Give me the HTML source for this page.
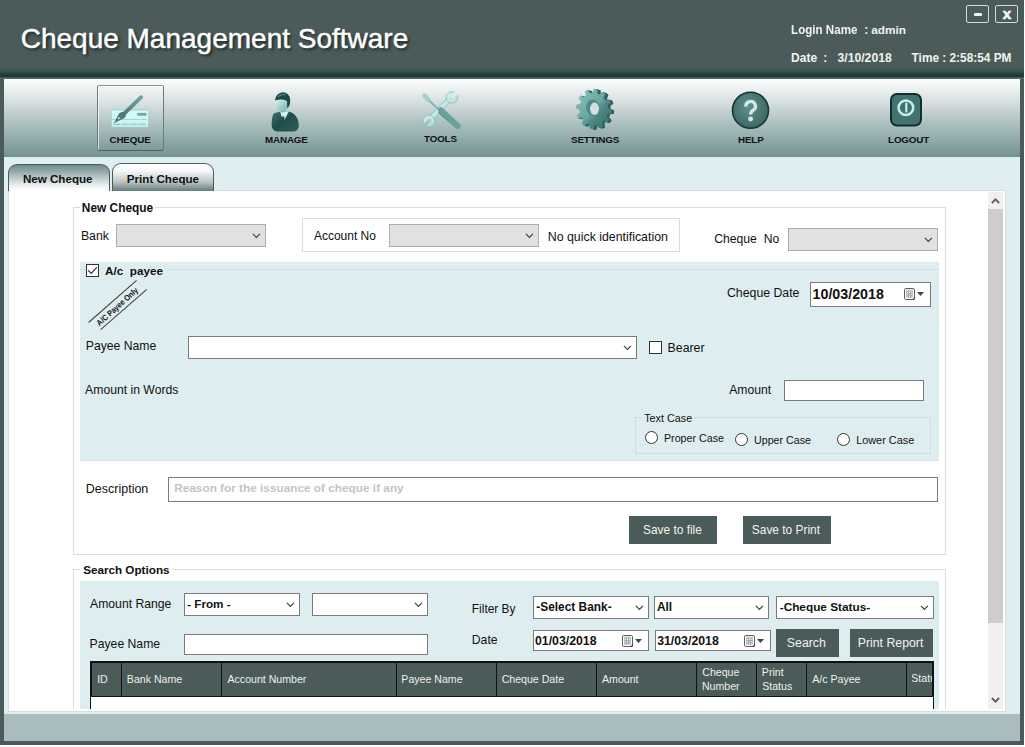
<!DOCTYPE html>
<html><head><meta charset="utf-8"><style>
html,body{margin:0;padding:0;}
body{width:1025px;height:747px;position:relative;overflow:hidden;background:#fff;font-family:"Liberation Sans",sans-serif;color:#111;}
body>div,body>svg{position:absolute;}
.t{position:absolute;white-space:nowrap;}
svg{position:absolute;overflow:visible;}
</style></head><body>
<div style="left:0px;top:0px;width:1024px;height:745px;background:#4a5b59"></div>
<div style="left:0px;top:67px;width:1024px;height:12px;background:linear-gradient(#4a5b59 0px,#3a5351 4px,#1c3d3b 8px,#173937 9.5px,#445856 10.5px,#4a5b59 11px,#6a7675 12px)"></div>
<div class="t" style="left:20.70px;top:25px;font-size:28px;line-height:28px;color:#fff;text-shadow:2px 2px 3px rgba(0,0,0,0.6);-webkit-text-stroke:0.45px #fff">Cheque Management Software</div>
<div class="t" style="left:791.10px;top:24px;font-size:11.6px;line-height:11.6px;font-weight:bold;color:#f2f2ee;transform:scaleY(1.03);transform-origin:0 100%">Login Name</div>
<div class="t" style="left:864.26px;top:24px;font-size:12px;line-height:12px;font-weight:bold;color:#f2f2ee;">:</div>
<div class="t" style="left:871.25px;top:25px;font-size:11.8px;line-height:11.8px;font-weight:bold;color:#f2f2ee;">admin</div>
<div class="t" style="left:791.07px;top:52px;font-size:12px;line-height:12px;font-weight:bold;color:#f2f2ee;">Date</div>
<div class="t" style="left:823.36px;top:52px;font-size:12px;line-height:12px;font-weight:bold;color:#f2f2ee;">:</div>
<div class="t" style="left:837.50px;top:52px;font-size:12.2px;line-height:12.2px;font-weight:bold;color:#f2f2ee;">3/10/2018</div>
<div class="t" style="left:911.58px;top:53px;font-size:11.85px;line-height:11.85px;font-weight:bold;color:#f2f2ee;">Time : 2:58:54 PM</div>
<div style="left:966px;top:5px;width:23px;height:18px;border:1px solid #cfe0dc;border-radius:2px;box-sizing:border-box"></div>
<div style="left:974px;top:13px;width:8px;height:3px;background:#f4f4f4;border-radius:1px"></div>
<div style="left:995px;top:5px;width:23px;height:18px;border:1px solid #cfe0dc;border-radius:2px;box-sizing:border-box"></div>
<div class="t" style="left:1002.85px;top:6px;font-size:15.2px;line-height:15.2px;font-weight:bold;color:#f6f6f6;-webkit-text-stroke:0.6px #f6f6f6">x</div>
<div style="left:4px;top:79px;width:1016px;height:78px;background:linear-gradient(#fbfcfc 0px,#f0f3f3 8px,#d3dcdc 25px,#abbfbf 45px,#8ea9a9 62px,#759292 78px)"></div>
<div style="left:97px;top:85px;width:67px;height:66px;border:1px solid;border-color:#8a9393 #6f7b7b #566363 #6f7b7b;border-radius:2px;box-sizing:border-box;box-shadow:inset 1px 1px 0 rgba(255,255,255,0.6);background:linear-gradient(rgba(255,255,255,0.2),rgba(0,0,0,0.02))"></div>
<div class="t" style="left:109.51px;top:135px;font-size:9.8px;line-height:9.8px;font-weight:bold;color:#111;letter-spacing:-0.15px">CHEQUE</div>
<div class="t" style="left:265.06px;top:135px;font-size:9.8px;line-height:9.8px;font-weight:bold;color:#111;letter-spacing:-0.15px">MANAGE</div>
<div class="t" style="left:424.00px;top:134px;font-size:9.8px;line-height:9.8px;font-weight:bold;color:#111;letter-spacing:-0.15px">TOOLS</div>
<div class="t" style="left:571.00px;top:135px;font-size:9.9px;line-height:9.9px;font-weight:bold;color:#111;letter-spacing:-0.15px">SETTINGS</div>
<div class="t" style="left:738.06px;top:135px;font-size:9.8px;line-height:9.8px;font-weight:bold;color:#111;letter-spacing:-0.15px">HELP</div>
<div class="t" style="left:888.06px;top:135px;font-size:9.8px;line-height:9.8px;font-weight:bold;color:#111;letter-spacing:-0.15px">LOGOUT</div>
<svg style="left:0;top:0" width="1025" height="160">
<defs>
<linearGradient id="card" x1="0" y1="0" x2="0" y2="1"><stop offset="0" stop-color="#a9dcd8"/><stop offset="0.12" stop-color="#d8fbf8"/><stop offset="1" stop-color="#c4f2ee"/></linearGradient>
<linearGradient id="pen" x1="0" y1="0" x2="1" y2="0"><stop offset="0" stop-color="#4a7e7a"/><stop offset="1" stop-color="#72a5a1"/></linearGradient>
<linearGradient id="face" x1="0" y1="0" x2="1" y2="1"><stop offset="0" stop-color="#c8f6f3"/><stop offset="1" stop-color="#6fa9a5"/></linearGradient>
<linearGradient id="suit" x1="0" y1="0" x2="1" y2="1"><stop offset="0" stop-color="#3f716d"/><stop offset="0.45" stop-color="#1f4d4a"/><stop offset="1" stop-color="#2c5c59"/></linearGradient>
<linearGradient id="wr" x1="0" y1="0" x2="1" y2="1"><stop offset="0" stop-color="#d6f6f4"/><stop offset="1" stop-color="#a8dcd9"/></linearGradient>
<linearGradient id="gear" x1="0" y1="0" x2="1" y2="1"><stop offset="0" stop-color="#8cc4c0"/><stop offset="0.5" stop-color="#6aa6a2"/><stop offset="0.62" stop-color="#4f8a86"/><stop offset="1" stop-color="#326763"/></linearGradient>
<radialGradient id="help" cx="0.45" cy="0.4" r="0.6"><stop offset="0" stop-color="#5f8f8c"/><stop offset="1" stop-color="#3c6865"/></radialGradient>
</defs>
<!-- cheque -->
<rect x="111.5" y="109.5" width="37" height="17.5" rx="1.5" fill="url(#card)" stroke="#9ed6d2" stroke-width="0.8"/>
<rect x="137.2" y="112.9" width="9.2" height="2.8" fill="#6fa8a4"/>
<path d="M112 119.5 H146.5" stroke="#8cc6c2" stroke-width="0.7"/>
<path d="M113 124.3 H147" stroke="#86c0bc" stroke-width="1.1" stroke-dasharray="7.6 0.9"/>
<path d="M124 113.8 L141.2 97.2" stroke="url(#pen)" stroke-width="3.9" stroke-linecap="round"/>
<path d="M113.8 123.2 L119 113.5 Q122 110.8 125.2 112.2 Q127 115 124.5 118 Z" fill="#4a7c78"/>
<circle cx="118.8" cy="118.3" r="1" fill="#c8efec"/>
<!-- manage -->
<path d="M273.8 113.2 Q271.4 117.5 271.7 125.5 Q272 130.2 276.5 131.6 L294 131.6 Q298.7 130.2 298.8 126 Q298.8 116.5 292 112.7 L288.5 111.2 L281 111.5 Z" fill="url(#suit)"/>
<path d="M280.2 111.8 L283.2 122.5 L289 111.3 Z" fill="#d4f0ee"/>
<path d="M281.8 116.5 L284.3 116.5 L284.6 122.5 L283.2 124 L281.9 122.5 Z" fill="#1f4a47"/>
<path d="M275.8 101.5 Q275.8 112.6 282 112.6 Q287.2 112.3 287.6 104 L287 100 Z" fill="url(#face)"/>
<path d="M275 100.5 Q275.5 93.5 282.5 92.3 Q289.5 92.5 290.2 100 Q290.3 106 287.3 108.5 L287 101 Q282 98.5 275 100.5 Z" fill="#1e4845"/>
<path d="M277.8 96.8 Q281 94.2 285.5 94.6" stroke="#5c8f8b" stroke-width="1.1" fill="none"/>
<!-- tools -->
<defs>
<mask id="jaw1" maskUnits="userSpaceOnUse" x="400" y="80" width="80" height="60"><rect x="400" y="80" width="80" height="60" fill="#fff"/>
<path d="M450.23 96.44 L453.06 99.26 L459.07 93.26 L456.24 90.43 Z" fill="#000"/><circle cx="451.65" cy="97.85" r="2" fill="#000"/></mask>
<mask id="jaw2" maskUnits="userSpaceOnUse" x="400" y="80" width="80" height="60"><rect x="400" y="80" width="80" height="60" fill="#fff"/>
<path d="M427.94 119.23 L430.77 122.06 L424.76 128.07 L421.93 125.24 Z" fill="#000"/><circle cx="429.35" cy="120.65" r="2" fill="#000"/></mask>
</defs>
<path d="M432 117 L448.5 100.5" stroke="#8cc2be" stroke-width="6" stroke-linecap="round"/>
<path d="M432 117 L448.5 100.5" stroke="url(#wr)" stroke-width="4.4" stroke-linecap="round"/>
<g mask="url(#jaw1)"><circle cx="452" cy="97.5" r="5.7" fill="url(#wr)" stroke="#8cc2be" stroke-width="0.9"/></g>
<g mask="url(#jaw2)"><circle cx="429" cy="121" r="5.7" fill="url(#wr)" stroke="#8cc2be" stroke-width="0.9"/></g>
<path d="M428.5 100 L441.5 112" stroke="#7fb6b2" stroke-width="2"/>
<path d="M424.5 95.8 L428.3 99.6" stroke="#bfe8e5" stroke-width="4" stroke-linecap="round"/>
<path d="M424.5 95.8 L428.3 99.6" stroke="#86bcb8" stroke-width="4.8" stroke-linecap="round" stroke-opacity="0.5" fill="none"/>
<path d="M440.5 109.5 L444 113 L458.2 125.6 Q459.5 128.8 456.5 128.8 L441.5 116 L438 112.5 Z" fill="#5d9490"/>
<path d="M441 110 L458 126" stroke="#6aa19d" stroke-width="5.5" stroke-linecap="round"/>
<!-- settings gear -->
<g transform="translate(593.2,108.8)">
<path d="M15.99 -0.59 L19.99 0.62 L19.56 4.15 L15.39 4.38 L14.14 7.48 L17.00 10.53 L14.87 13.38 L11.14 11.49 L8.51 13.55 L9.46 17.62 L6.19 19.02 L3.90 15.52 L0.59 15.99 L-0.62 19.99 L-4.15 19.56 L-4.38 15.39 L-7.48 14.14 L-10.53 17.00 L-13.38 14.87 L-11.49 11.14 L-13.55 8.51 L-17.62 9.46 L-19.02 6.19 L-15.52 3.90 L-15.99 0.59 L-19.99 -0.62 L-19.56 -4.15 L-15.39 -4.38 L-14.14 -7.48 L-17.00 -10.53 L-14.87 -13.38 L-11.14 -11.49 L-8.51 -13.55 L-9.46 -17.62 L-6.19 -19.02 L-3.90 -15.52 L-0.59 -15.99 L0.62 -19.99 L4.15 -19.56 L4.38 -15.39 L7.48 -14.14 L10.53 -17.00 L13.38 -14.87 L11.49 -11.14 L13.55 -8.51 L17.62 -9.46 L19.02 -6.19 L15.52 -3.90 Z" transform="translate(3.85,1.05) scale(0.86,1)" fill="#2f6360"/><path d="M15.99 -0.59 L19.99 0.62 L19.56 4.15 L15.39 4.38 L14.14 7.48 L17.00 10.53 L14.87 13.38 L11.14 11.49 L8.51 13.55 L9.46 17.62 L6.19 19.02 L3.90 15.52 L0.59 15.99 L-0.62 19.99 L-4.15 19.56 L-4.38 15.39 L-7.48 14.14 L-10.53 17.00 L-13.38 14.87 L-11.49 11.14 L-13.55 8.51 L-17.62 9.46 L-19.02 6.19 L-15.52 3.90 L-15.99 0.59 L-19.99 -0.62 L-19.56 -4.15 L-15.39 -4.38 L-14.14 -7.48 L-17.00 -10.53 L-14.87 -13.38 L-11.14 -11.49 L-8.51 -13.55 L-9.46 -17.62 L-6.19 -19.02 L-3.90 -15.52 L-0.59 -15.99 L0.62 -19.99 L4.15 -19.56 L4.38 -15.39 L7.48 -14.14 L10.53 -17.00 L13.38 -14.87 L11.49 -11.14 L13.55 -8.51 L17.62 -9.46 L19.02 -6.19 L15.52 -3.90 Z" transform="translate(3.30,0.90) scale(0.86,1)" fill="#2f6360"/><path d="M15.99 -0.59 L19.99 0.62 L19.56 4.15 L15.39 4.38 L14.14 7.48 L17.00 10.53 L14.87 13.38 L11.14 11.49 L8.51 13.55 L9.46 17.62 L6.19 19.02 L3.90 15.52 L0.59 15.99 L-0.62 19.99 L-4.15 19.56 L-4.38 15.39 L-7.48 14.14 L-10.53 17.00 L-13.38 14.87 L-11.49 11.14 L-13.55 8.51 L-17.62 9.46 L-19.02 6.19 L-15.52 3.90 L-15.99 0.59 L-19.99 -0.62 L-19.56 -4.15 L-15.39 -4.38 L-14.14 -7.48 L-17.00 -10.53 L-14.87 -13.38 L-11.14 -11.49 L-8.51 -13.55 L-9.46 -17.62 L-6.19 -19.02 L-3.90 -15.52 L-0.59 -15.99 L0.62 -19.99 L4.15 -19.56 L4.38 -15.39 L7.48 -14.14 L10.53 -17.00 L13.38 -14.87 L11.49 -11.14 L13.55 -8.51 L17.62 -9.46 L19.02 -6.19 L15.52 -3.90 Z" transform="translate(2.75,0.75) scale(0.86,1)" fill="#2f6360"/><path d="M15.99 -0.59 L19.99 0.62 L19.56 4.15 L15.39 4.38 L14.14 7.48 L17.00 10.53 L14.87 13.38 L11.14 11.49 L8.51 13.55 L9.46 17.62 L6.19 19.02 L3.90 15.52 L0.59 15.99 L-0.62 19.99 L-4.15 19.56 L-4.38 15.39 L-7.48 14.14 L-10.53 17.00 L-13.38 14.87 L-11.49 11.14 L-13.55 8.51 L-17.62 9.46 L-19.02 6.19 L-15.52 3.90 L-15.99 0.59 L-19.99 -0.62 L-19.56 -4.15 L-15.39 -4.38 L-14.14 -7.48 L-17.00 -10.53 L-14.87 -13.38 L-11.14 -11.49 L-8.51 -13.55 L-9.46 -17.62 L-6.19 -19.02 L-3.90 -15.52 L-0.59 -15.99 L0.62 -19.99 L4.15 -19.56 L4.38 -15.39 L7.48 -14.14 L10.53 -17.00 L13.38 -14.87 L11.49 -11.14 L13.55 -8.51 L17.62 -9.46 L19.02 -6.19 L15.52 -3.90 Z" transform="translate(2.20,0.60) scale(0.86,1)" fill="#2f6360"/><path d="M15.99 -0.59 L19.99 0.62 L19.56 4.15 L15.39 4.38 L14.14 7.48 L17.00 10.53 L14.87 13.38 L11.14 11.49 L8.51 13.55 L9.46 17.62 L6.19 19.02 L3.90 15.52 L0.59 15.99 L-0.62 19.99 L-4.15 19.56 L-4.38 15.39 L-7.48 14.14 L-10.53 17.00 L-13.38 14.87 L-11.49 11.14 L-13.55 8.51 L-17.62 9.46 L-19.02 6.19 L-15.52 3.90 L-15.99 0.59 L-19.99 -0.62 L-19.56 -4.15 L-15.39 -4.38 L-14.14 -7.48 L-17.00 -10.53 L-14.87 -13.38 L-11.14 -11.49 L-8.51 -13.55 L-9.46 -17.62 L-6.19 -19.02 L-3.90 -15.52 L-0.59 -15.99 L0.62 -19.99 L4.15 -19.56 L4.38 -15.39 L7.48 -14.14 L10.53 -17.00 L13.38 -14.87 L11.49 -11.14 L13.55 -8.51 L17.62 -9.46 L19.02 -6.19 L15.52 -3.90 Z" transform="translate(1.65,0.45) scale(0.86,1)" fill="#2f6360"/><path d="M15.99 -0.59 L19.99 0.62 L19.56 4.15 L15.39 4.38 L14.14 7.48 L17.00 10.53 L14.87 13.38 L11.14 11.49 L8.51 13.55 L9.46 17.62 L6.19 19.02 L3.90 15.52 L0.59 15.99 L-0.62 19.99 L-4.15 19.56 L-4.38 15.39 L-7.48 14.14 L-10.53 17.00 L-13.38 14.87 L-11.49 11.14 L-13.55 8.51 L-17.62 9.46 L-19.02 6.19 L-15.52 3.90 L-15.99 0.59 L-19.99 -0.62 L-19.56 -4.15 L-15.39 -4.38 L-14.14 -7.48 L-17.00 -10.53 L-14.87 -13.38 L-11.14 -11.49 L-8.51 -13.55 L-9.46 -17.62 L-6.19 -19.02 L-3.90 -15.52 L-0.59 -15.99 L0.62 -19.99 L4.15 -19.56 L4.38 -15.39 L7.48 -14.14 L10.53 -17.00 L13.38 -14.87 L11.49 -11.14 L13.55 -8.51 L17.62 -9.46 L19.02 -6.19 L15.52 -3.90 Z" transform="translate(1.10,0.30) scale(0.86,1)" fill="#4a837f"/><path d="M15.99 -0.59 L19.99 0.62 L19.56 4.15 L15.39 4.38 L14.14 7.48 L17.00 10.53 L14.87 13.38 L11.14 11.49 L8.51 13.55 L9.46 17.62 L6.19 19.02 L3.90 15.52 L0.59 15.99 L-0.62 19.99 L-4.15 19.56 L-4.38 15.39 L-7.48 14.14 L-10.53 17.00 L-13.38 14.87 L-11.49 11.14 L-13.55 8.51 L-17.62 9.46 L-19.02 6.19 L-15.52 3.90 L-15.99 0.59 L-19.99 -0.62 L-19.56 -4.15 L-15.39 -4.38 L-14.14 -7.48 L-17.00 -10.53 L-14.87 -13.38 L-11.14 -11.49 L-8.51 -13.55 L-9.46 -17.62 L-6.19 -19.02 L-3.90 -15.52 L-0.59 -15.99 L0.62 -19.99 L4.15 -19.56 L4.38 -15.39 L7.48 -14.14 L10.53 -17.00 L13.38 -14.87 L11.49 -11.14 L13.55 -8.51 L17.62 -9.46 L19.02 -6.19 L15.52 -3.90 Z" transform="translate(0.55,0.15) scale(0.86,1)" fill="#4a837f"/>
<path d="M15.99 -0.59 L19.99 0.62 L19.56 4.15 L15.39 4.38 L14.14 7.48 L17.00 10.53 L14.87 13.38 L11.14 11.49 L8.51 13.55 L9.46 17.62 L6.19 19.02 L3.90 15.52 L0.59 15.99 L-0.62 19.99 L-4.15 19.56 L-4.38 15.39 L-7.48 14.14 L-10.53 17.00 L-13.38 14.87 L-11.49 11.14 L-13.55 8.51 L-17.62 9.46 L-19.02 6.19 L-15.52 3.90 L-15.99 0.59 L-19.99 -0.62 L-19.56 -4.15 L-15.39 -4.38 L-14.14 -7.48 L-17.00 -10.53 L-14.87 -13.38 L-11.14 -11.49 L-8.51 -13.55 L-9.46 -17.62 L-6.19 -19.02 L-3.90 -15.52 L-0.59 -15.99 L0.62 -19.99 L4.15 -19.56 L4.38 -15.39 L7.48 -14.14 L10.53 -17.00 L13.38 -14.87 L11.49 -11.14 L13.55 -8.51 L17.62 -9.46 L19.02 -6.19 L15.52 -3.90 Z" transform="scale(0.86,1)" fill="url(#gear)"/>
<ellipse cx="-0.5" cy="-1.2" rx="6.6" ry="7.8" fill="#4f8a86"/>
<ellipse cx="1.3" cy="0" rx="4.4" ry="6.2" fill="#d4dfdf"/>
</g>
<!-- help -->
<circle cx="750.5" cy="110.3" r="18" fill="url(#help)" stroke="#173533" stroke-width="1.6"/>
<path d="M745.9 106.6 A4.75 4.75 0 1 1 753.2 110.2 Q750.6 111.6 750.6 114.6" stroke="#d4eaea" stroke-width="3.3" fill="none"/><circle cx="750.6" cy="119" r="2.45" fill="#d4eaea"/>
<!-- logout -->
<rect x="891" y="94" width="30" height="31.5" rx="6" fill="#427370" stroke="#112e2c" stroke-width="2"/>
<circle cx="905.9" cy="107.8" r="7.3" fill="none" stroke="#c6eeec" stroke-width="2.5"/>
<path d="M906.3 102.8 V112.4" stroke="#c6eeec" stroke-width="2.2"/>
</svg>
<div style="left:4px;top:157px;width:1016px;height:557px;background:#dfeef1"></div>
<div style="left:8px;top:164px;width:102px;height:28px;border:1px solid #4a5b59;border-bottom:none;border-radius:9px 9px 0 0;box-sizing:border-box;background:linear-gradient(#718b8b 0px,#91a7a7 6px,#c2cfcf 14px,#e9eeee 20px,#ffffff 25px)"></div>
<div class="t" style="left:22.95px;top:173px;font-size:11.6px;line-height:11.6px;font-weight:bold;color:#111;">New Cheque</div>
<div style="left:112px;top:163px;width:102px;height:29px;border:1px solid #4a5b59;border-bottom:none;border-radius:9px 9px 0 0;box-sizing:border-box;background:linear-gradient(#ffffff 0px,#f6f8f8 7px,#b9c4c4 18px,#5e7272 28px)"></div>
<div class="t" style="left:126.85px;top:173px;font-size:11.6px;line-height:11.6px;font-weight:bold;color:#111;">Print Cheque</div>
<div style="left:8px;top:191px;width:998px;height:521px;background:#fff;border:1px solid #dcdcdc;border-top:none;box-sizing:border-box"></div>
<div style="left:217px;top:190px;width:789px;height:1px;background:#d6dcdd"></div>
<div style="left:988px;top:192px;width:15px;height:517px;background:#f0f0f0"></div>
<div style="left:988px;top:209px;width:15px;height:414px;background:#cdcdcd"></div>
<svg style="left:988px;top:192px" width="15" height="17"><path d="M3.9 11 L7.5 7.4 L11.1 11" stroke="#606060" stroke-width="1.9" fill="none"/></svg>
<svg style="left:988px;top:692px" width="15" height="17"><path d="M3.9 6 L7.5 9.6 L11.1 6" stroke="#606060" stroke-width="1.9" fill="none"/></svg>
<div style="left:73px;top:207px;width:873px;height:348px;border:1px solid #dcdcdc;box-sizing:border-box"></div>
<div style="left:80px;top:200px;width:75px;height:14px;background:#fff"></div>
<div class="t" style="left:81.83px;top:203px;font-size:11.9px;line-height:11.9px;font-weight:bold;color:#111;">New Cheque</div>
<div class="t" style="left:80.92px;top:230px;font-size:12.3px;line-height:12.3px;color:#111;">Bank</div>
<div style="left:116px;top:224px;width:150px;height:23px;background:#e1e1e1;border:1px solid #adadad;box-sizing:border-box"></div>
<svg style="left:252.2px;top:231.0px" width="10" height="8"><path d="M0.9 2.9 L4.4 6.4 L7.9 2.9" stroke="#404040" stroke-width="1.15" fill="none"/></svg>
<div style="left:302px;top:218px;width:378px;height:34px;border:1px solid #dcdcdc;box-sizing:border-box"></div>
<div class="t" style="left:313.90px;top:230px;font-size:12px;line-height:12px;color:#111;">Account No</div>
<div style="left:389px;top:224px;width:150px;height:23px;background:#e1e1e1;border:1px solid #adadad;box-sizing:border-box"></div>
<svg style="left:525.2px;top:231.0px" width="10" height="8"><path d="M0.9 2.9 L4.4 6.4 L7.9 2.9" stroke="#404040" stroke-width="1.15" fill="none"/></svg>
<div class="t" style="left:547.81px;top:231px;font-size:12.35px;line-height:12.35px;color:#111;">No quick identification</div>
<div class="t" style="left:714.19px;top:233px;font-size:12.2px;line-height:12.2px;color:#111;">Cheque</div>
<div class="t" style="left:763.82px;top:233px;font-size:12.2px;line-height:12.2px;color:#111;">No</div>
<div style="left:788px;top:228px;width:150px;height:23px;background:#e1e1e1;border:1px solid #adadad;box-sizing:border-box"></div>
<svg style="left:924.2px;top:235.0px" width="10" height="8"><path d="M0.9 2.9 L4.4 6.4 L7.9 2.9" stroke="#404040" stroke-width="1.15" fill="none"/></svg>
<div style="left:80px;top:262px;width:859px;height:199px;background:#deedf0;border-bottom:1px solid #d3e0e3;box-sizing:border-box"></div>
<div style="left:80px;top:269px;width:859px;height:1px;background:#cfdee1"></div>
<div style="left:86px;top:263px;width:83px;height:16px;background:#deedf0"></div>
<div style="left:86px;top:264px;width:13px;height:13px;background:#fff;border:1px solid #333;box-sizing:border-box"></div>
<svg style="left:86px;top:264px" width="13" height="13"><path d="M2.3 6.5 L5.3 9.4 L10.8 3.4" stroke="#333" stroke-width="1.2" fill="none"/></svg>
<div class="t" style="left:105.11px;top:265px;font-size:11.7px;line-height:11.7px;font-weight:bold;color:#111;">A/c&nbsp; payee</div>
<svg style="left:82px;top:278px" width="70" height="56"><path d="M6.6 44.5 L54.6 2.4" stroke="#3e4a4a" stroke-width="1.1"/><path d="M18.6 51.6 L64.8 11.4" stroke="#3e4a4a" stroke-width="1.1"/><text x="0" y="0" font-family="Liberation Sans" font-weight="bold" font-size="8.3" textLength="52.5" lengthAdjust="spacingAndGlyphs" fill="#111" transform="translate(17.6,48.2) rotate(-42)">A/C Payee Only</text></svg>
<div class="t" style="left:726.99px;top:287px;font-size:12.3px;line-height:12.3px;color:#111;">Cheque Date</div>
<div style="left:810px;top:282px;width:121px;height:25px;background:#fff;border:1px solid #7a7a7a;box-sizing:border-box"></div>
<div class="t" style="left:812.54px;top:287px;font-size:14.25px;line-height:14.25px;font-weight:bold;color:#111;">10/03/2018</div>
<svg style="left:904px;top:288px" width="22" height="13"><rect x="0.5" y="0.5" width="10" height="11" rx="1.3" fill="#fff" stroke="#5e5e5e" stroke-width="1"/><path d="M2 2.2 H9" stroke="#9a9a9a" stroke-width="0.8"/><rect x="2.2" y="3.2" width="6.6" height="6.6" fill="#a4a8ae"/><rect x="2.9" y="4.0" width="1" height="1" fill="#fff"/><rect x="2.9" y="6.2" width="1" height="1" fill="#fff"/><rect x="2.9" y="8.4" width="1" height="1" fill="#fff"/><rect x="5.1" y="4.0" width="1" height="1" fill="#fff"/><rect x="5.1" y="6.2" width="1" height="1" fill="#fff"/><rect x="5.1" y="8.4" width="1" height="1" fill="#fff"/><rect x="7.3" y="4.0" width="1" height="1" fill="#fff"/><rect x="7.3" y="6.2" width="1" height="1" fill="#fff"/><rect x="7.3" y="8.4" width="1" height="1" fill="#fff"/><path d="M8.3 11.6 L10.9 9 L10.9 11.6 Z" fill="#3a3a3a"/><path d="M13 4 H20 L16.5 8 Z" fill="#3d4552"/></svg>
<div class="t" style="left:85.82px;top:340px;font-size:12.2px;line-height:12.2px;color:#111;">Payee Name</div>
<div style="left:188px;top:336px;width:449px;height:23px;background:#fff;border:1px solid #7a7a7a;box-sizing:border-box"></div>
<svg style="left:623.2px;top:343.0px" width="10" height="8"><path d="M0.9 2.9 L4.4 6.4 L7.9 2.9" stroke="#404040" stroke-width="1.15" fill="none"/></svg>
<div style="left:649px;top:341px;width:13px;height:13px;background:#fff;border:1px solid #333;box-sizing:border-box"></div>
<div class="t" style="left:667.62px;top:342px;font-size:12.3px;line-height:12.3px;color:#111;">Bearer</div>
<div class="t" style="left:85.10px;top:384px;font-size:12.2px;line-height:12.2px;color:#111;">Amount in Words</div>
<div class="t" style="left:729.20px;top:384px;font-size:12.2px;line-height:12.2px;color:#111;">Amount</div>
<div style="left:784px;top:380px;width:140px;height:21px;background:#fff;border:1px solid #7a7a7a;box-sizing:border-box"></div>
<div style="left:635px;top:417px;width:296px;height:37px;border:1px solid #cfdde0;box-sizing:border-box"></div>
<div style="left:641px;top:410px;width:53px;height:14px;background:#deedf0"></div>
<div class="t" style="left:644.18px;top:413px;font-size:10.8px;line-height:10.8px;color:#111;">Text Case</div>
<svg style="left:645px;top:431px" width="13" height="13"><circle cx="6.5" cy="6.5" r="6" fill="#fff" stroke="#333" stroke-width="1"/></svg>
<div class="t" style="left:663.94px;top:433px;font-size:10.7px;line-height:10.7px;color:#111;">Proper Case</div>
<svg style="left:735px;top:433px" width="13" height="13"><circle cx="6.5" cy="6.5" r="6" fill="#fff" stroke="#333" stroke-width="1"/></svg>
<div class="t" style="left:754.00px;top:435px;font-size:10.7px;line-height:10.7px;color:#111;">Upper Case</div>
<svg style="left:837px;top:433px" width="13" height="13"><circle cx="6.5" cy="6.5" r="6" fill="#fff" stroke="#333" stroke-width="1"/></svg>
<div class="t" style="left:856.13px;top:435px;font-size:10.9px;line-height:10.9px;color:#111;">Lower Case</div>
<div class="t" style="left:85.80px;top:483px;font-size:12.5px;line-height:12.5px;color:#111;">Description</div>
<div style="left:168px;top:477px;width:770px;height:25px;background:#fff;border:1px solid #7a7a7a;box-sizing:border-box"></div>
<div class="t" style="left:174.23px;top:483px;font-size:11.8px;line-height:11.8px;font-weight:bold;color:#c4c4c4;">Reason for the issuance of cheque if any</div>
<div style="left:629px;top:516px;width:88px;height:28px;background:#4a5b59"></div>
<div class="t" style="left:643.06px;top:525px;font-size:11.9px;line-height:11.9px;color:#f2f2f2;">Save to file</div>
<div style="left:743px;top:516px;width:88px;height:28px;background:#4a5b59"></div>
<div class="t" style="left:751.86px;top:525px;font-size:11.9px;line-height:11.9px;color:#f2f2f2;">Save to Print</div>
<div style="left:73px;top:569px;width:873px;height:140px;border:1px solid #dcdcdc;border-bottom:none;box-sizing:border-box"></div>
<div style="left:80px;top:563px;width:92px;height:14px;background:#fff"></div>
<div class="t" style="left:83.15px;top:564px;font-size:11.7px;line-height:11.7px;font-weight:bold;color:#111;">Search Options</div>
<div style="left:80px;top:581px;width:859px;height:128px;background:#deedf0"></div>
<div class="t" style="left:90.05px;top:598px;font-size:12.2px;line-height:12.2px;color:#111;">Amount Range</div>
<div style="left:184px;top:593px;width:116px;height:23px;background:#fff;border:1px solid #7a7a7a;box-sizing:border-box"></div>
<svg style="left:286.2px;top:600.0px" width="10" height="8"><path d="M0.9 2.9 L4.4 6.4 L7.9 2.9" stroke="#404040" stroke-width="1.15" fill="none"/></svg>
<div class="t" style="left:187.13px;top:598px;font-size:11.7px;line-height:11.7px;font-weight:bold;color:#111;">- From -</div>
<div style="left:312px;top:593px;width:116px;height:23px;background:#fff;border:1px solid #7a7a7a;box-sizing:border-box"></div>
<svg style="left:414.2px;top:600.0px" width="10" height="8"><path d="M0.9 2.9 L4.4 6.4 L7.9 2.9" stroke="#404040" stroke-width="1.15" fill="none"/></svg>
<div class="t" style="left:89.62px;top:638px;font-size:12.2px;line-height:12.2px;color:#111;">Payee Name</div>
<div style="left:184px;top:634px;width:244px;height:21px;background:#fff;border:1px solid #7a7a7a;box-sizing:border-box"></div>
<div class="t" style="left:471.85px;top:604px;font-size:11.9px;line-height:11.9px;color:#111;">Filter By</div>
<div style="left:533px;top:596px;width:116px;height:23px;background:#fff;border:1px solid #7a7a7a;box-sizing:border-box"></div>
<svg style="left:635.2px;top:603.0px" width="10" height="8"><path d="M0.9 2.9 L4.4 6.4 L7.9 2.9" stroke="#404040" stroke-width="1.15" fill="none"/></svg>
<div class="t" style="left:536.32px;top:602px;font-size:11.9px;line-height:11.9px;font-weight:bold;color:#111;">-Select Bank-</div>
<div style="left:654px;top:596px;width:115px;height:23px;background:#fff;border:1px solid #7a7a7a;box-sizing:border-box"></div>
<svg style="left:755.2px;top:603.0px" width="10" height="8"><path d="M0.9 2.9 L4.4 6.4 L7.9 2.9" stroke="#404040" stroke-width="1.15" fill="none"/></svg>
<div class="t" style="left:656.90px;top:602px;font-size:11.9px;line-height:11.9px;font-weight:bold;color:#111;">All</div>
<div style="left:776px;top:596px;width:158px;height:23px;background:#fff;border:1px solid #7a7a7a;box-sizing:border-box"></div>
<svg style="left:920.2px;top:603.0px" width="10" height="8"><path d="M0.9 2.9 L4.4 6.4 L7.9 2.9" stroke="#404040" stroke-width="1.15" fill="none"/></svg>
<div class="t" style="left:779.73px;top:602px;font-size:11.8px;line-height:11.8px;font-weight:bold;color:#111;">-Cheque Status-</div>
<div class="t" style="left:471.82px;top:634px;font-size:12.2px;line-height:12.2px;color:#111;">Date</div>
<div style="left:533px;top:630px;width:116px;height:21px;background:#fff;border:1px solid #7a7a7a;box-sizing:border-box"></div>
<div class="t" style="left:535.01px;top:635px;font-size:12.3px;line-height:12.3px;font-weight:bold;color:#111;">01/03/2018</div>
<svg style="left:622px;top:635px" width="22" height="13"><rect x="0.5" y="0.5" width="10" height="11" rx="1.3" fill="#fff" stroke="#5e5e5e" stroke-width="1"/><path d="M2 2.2 H9" stroke="#9a9a9a" stroke-width="0.8"/><rect x="2.2" y="3.2" width="6.6" height="6.6" fill="#a4a8ae"/><rect x="2.9" y="4.0" width="1" height="1" fill="#fff"/><rect x="2.9" y="6.2" width="1" height="1" fill="#fff"/><rect x="2.9" y="8.4" width="1" height="1" fill="#fff"/><rect x="5.1" y="4.0" width="1" height="1" fill="#fff"/><rect x="5.1" y="6.2" width="1" height="1" fill="#fff"/><rect x="5.1" y="8.4" width="1" height="1" fill="#fff"/><rect x="7.3" y="4.0" width="1" height="1" fill="#fff"/><rect x="7.3" y="6.2" width="1" height="1" fill="#fff"/><rect x="7.3" y="8.4" width="1" height="1" fill="#fff"/><path d="M8.3 11.6 L10.9 9 L10.9 11.6 Z" fill="#3a3a3a"/><path d="M13 4 H20 L16.5 8 Z" fill="#3d4552"/></svg>
<div style="left:655px;top:630px;width:116px;height:21px;background:#fff;border:1px solid #7a7a7a;box-sizing:border-box"></div>
<div class="t" style="left:657.19px;top:635px;font-size:12.3px;line-height:12.3px;font-weight:bold;color:#111;">31/03/2018</div>
<svg style="left:744px;top:635px" width="22" height="13"><rect x="0.5" y="0.5" width="10" height="11" rx="1.3" fill="#fff" stroke="#5e5e5e" stroke-width="1"/><path d="M2 2.2 H9" stroke="#9a9a9a" stroke-width="0.8"/><rect x="2.2" y="3.2" width="6.6" height="6.6" fill="#a4a8ae"/><rect x="2.9" y="4.0" width="1" height="1" fill="#fff"/><rect x="2.9" y="6.2" width="1" height="1" fill="#fff"/><rect x="2.9" y="8.4" width="1" height="1" fill="#fff"/><rect x="5.1" y="4.0" width="1" height="1" fill="#fff"/><rect x="5.1" y="6.2" width="1" height="1" fill="#fff"/><rect x="5.1" y="8.4" width="1" height="1" fill="#fff"/><rect x="7.3" y="4.0" width="1" height="1" fill="#fff"/><rect x="7.3" y="6.2" width="1" height="1" fill="#fff"/><rect x="7.3" y="8.4" width="1" height="1" fill="#fff"/><path d="M8.3 11.6 L10.9 9 L10.9 11.6 Z" fill="#3a3a3a"/><path d="M13 4 H20 L16.5 8 Z" fill="#3d4552"/></svg>
<div style="left:776px;top:629px;width:63px;height:28px;background:#4a5b59"></div>
<div class="t" style="left:786.85px;top:637px;font-size:12.3px;line-height:12.3px;color:#f2f2f2;">Search</div>
<div style="left:850px;top:629px;width:83px;height:28px;background:#4a5b59"></div>
<div class="t" style="left:857.72px;top:637px;font-size:12.3px;line-height:12.3px;color:#f2f2f2;">Print Report</div>
<div style="left:90px;top:661px;width:844px;height:48px;background:#fff;border-top:2px solid #111;border-left:1px solid #111;border-right:1px solid #111;box-sizing:border-box"></div>
<div style="left:90px;top:663px;width:844px;height:34px;background:#4a5b59;border-left:2px solid #111;border-right:2px solid #111;border-bottom:1px solid #111;box-sizing:border-box"></div>
<div style="left:121px;top:663px;width:1px;height:33px;background:#111"></div>
<div style="left:221px;top:663px;width:1px;height:33px;background:#111"></div>
<div style="left:396px;top:663px;width:1px;height:33px;background:#111"></div>
<div style="left:496px;top:663px;width:1px;height:33px;background:#111"></div>
<div style="left:596px;top:663px;width:1px;height:33px;background:#111"></div>
<div style="left:696px;top:663px;width:1px;height:33px;background:#111"></div>
<div style="left:756px;top:663px;width:1px;height:33px;background:#111"></div>
<div style="left:806px;top:663px;width:1px;height:33px;background:#111"></div>
<div style="left:906px;top:663px;width:1px;height:33px;background:#111"></div>
<div class="t" style="left:97.15px;top:674px;font-size:10.6px;line-height:10.6px;color:#eef0ee;">ID</div>
<div class="t" style="left:126.85px;top:674px;font-size:10.6px;line-height:10.6px;color:#eef0ee;">Bank Name</div>
<div class="t" style="left:227.50px;top:674px;font-size:10.6px;line-height:10.6px;color:#eef0ee;">Account Number</div>
<div class="t" style="left:401.35px;top:674px;font-size:10.6px;line-height:10.6px;color:#eef0ee;">Payee Name</div>
<div class="t" style="left:501.67px;top:674px;font-size:10.6px;line-height:10.6px;color:#eef0ee;">Cheque Date</div>
<div class="t" style="left:602.00px;top:674px;font-size:10.6px;line-height:10.6px;color:#eef0ee;">Amount</div>
<div class="t" style="left:702.27px;top:667px;font-size:10.6px;line-height:10.6px;color:#eef0ee;">Cheque</div>
<div class="t" style="left:701.95px;top:681px;font-size:10.6px;line-height:10.6px;color:#eef0ee;">Number</div>
<div class="t" style="left:761.85px;top:667px;font-size:10.6px;line-height:10.6px;color:#eef0ee;">Print</div>
<div class="t" style="left:762.22px;top:681px;font-size:10.6px;line-height:10.6px;color:#eef0ee;">Status</div>
<div class="t" style="left:812.20px;top:674px;font-size:10.6px;line-height:10.6px;color:#eef0ee;">A/c Payee</div>
<div style="left:907px;top:663px;width:25px;height:33px;overflow:hidden"><div class="t" style="left:4.3px;top:10px;font-size:10.6px;line-height:10.6px;color:#eef0ee">Status</div></div>
<div style="left:8px;top:711px;width:998px;height:1px;background:#dcdcdc"></div>
<div style="left:4px;top:712px;width:1016px;height:2px;background:#dfeef1"></div>
<div style="left:4px;top:714px;width:1016px;height:27px;background:#a9bdbe"></div>
</body></html>
